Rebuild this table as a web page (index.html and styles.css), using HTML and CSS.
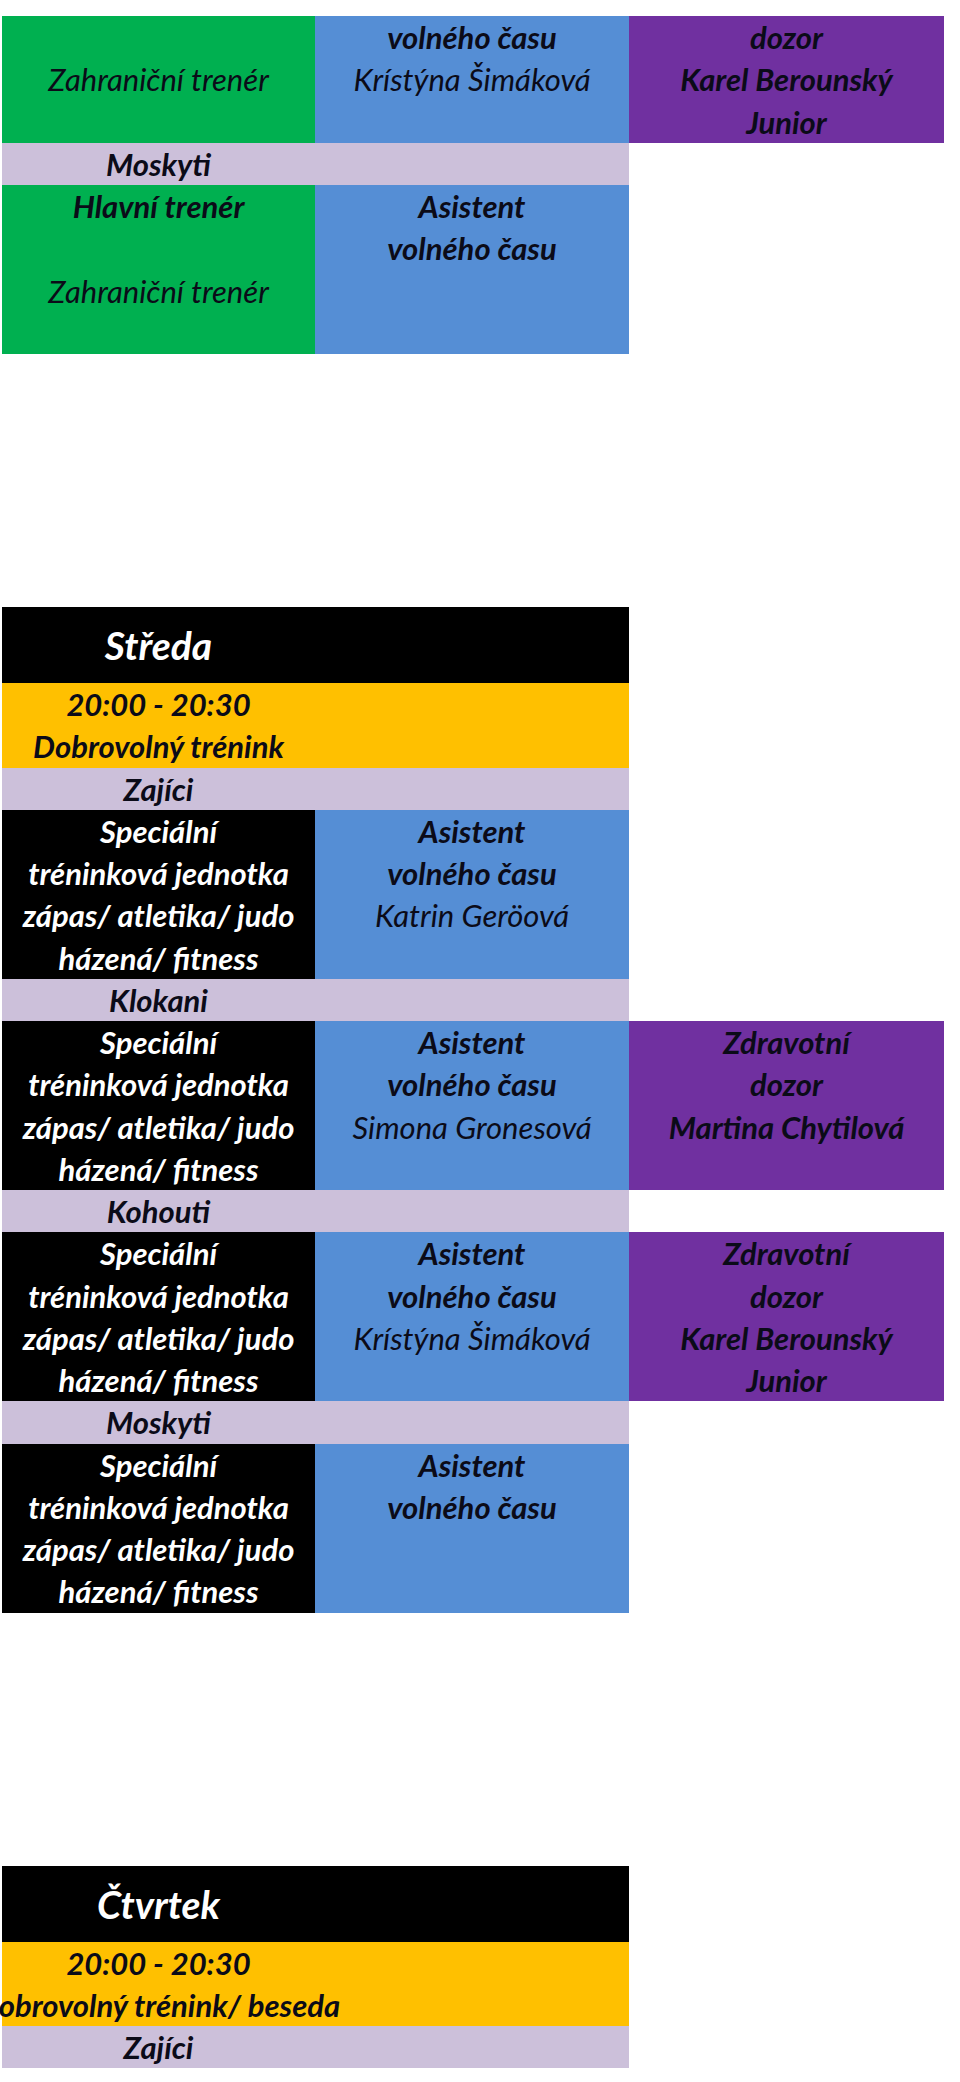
FILE: index.html
```html
<!DOCTYPE html>
<html lang="cs">
<head>
<meta charset="utf-8">
<title>Rozvrh</title>
<link rel="stylesheet" href="styles.css">
</head>
<body>
<main class="page">

  <section class="day">
    <div class="grid">
      <div class="cell green c1">
        <div class="ln"></div>
        <div class="ln">Zahraniční trenér</div>
      </div>
      <div class="cell blue">
        <div class="ln b">volného času</div>
        <div class="ln">Krístýna Šimáková</div>
      </div>
      <div class="cell purple">
        <div class="ln b">dozor</div>
        <div class="ln b">Karel Berounský</div>
        <div class="ln b">Junior</div>
      </div>

      <div class="band lav"><div class="ln b">Moskyti</div></div>

      <div class="cell green c1 h4">
        <div class="ln b">Hlavní trenér</div>
        <div class="ln"></div>
        <div class="ln">Zahraniční trenér</div>
      </div>
      <div class="cell blue h4">
        <div class="ln b">Asistent</div>
        <div class="ln b">volného času</div>
      </div>
    </div>
  </section>

  <section class="day">
    <div class="grid">
      <div class="band head"><div class="ln">Středa</div></div>
      <div class="band yellow">
        <div class="ln b">20:00 - 20:30</div>
        <div class="ln b">Dobrovolný trénink</div>
      </div>

      <div class="band lav"><div class="ln b">Zajíci</div></div>
      <div class="cell black c1 h4">
        <div class="ln b">Speciální</div>
        <div class="ln b">tréninková jednotka</div>
        <div class="ln b">zápas/ atletika/ judo</div>
        <div class="ln b">házená/ fitness</div>
      </div>
      <div class="cell blue h4">
        <div class="ln b">Asistent</div>
        <div class="ln b">volného času</div>
        <div class="ln">Katrin Geröová</div>
      </div>

      <div class="band lav"><div class="ln b">Klokani</div></div>
      <div class="cell black c1 h4">
        <div class="ln b">Speciální</div>
        <div class="ln b">tréninková jednotka</div>
        <div class="ln b">zápas/ atletika/ judo</div>
        <div class="ln b">házená/ fitness</div>
      </div>
      <div class="cell blue h4">
        <div class="ln b">Asistent</div>
        <div class="ln b">volného času</div>
        <div class="ln">Simona Gronesová</div>
      </div>
      <div class="cell purple h4">
        <div class="ln b">Zdravotní</div>
        <div class="ln b">dozor</div>
        <div class="ln b">Martina Chytilová</div>
      </div>

      <div class="band lav"><div class="ln b">Kohouti</div></div>
      <div class="cell black c1 h4">
        <div class="ln b">Speciální</div>
        <div class="ln b">tréninková jednotka</div>
        <div class="ln b">zápas/ atletika/ judo</div>
        <div class="ln b">házená/ fitness</div>
      </div>
      <div class="cell blue h4">
        <div class="ln b">Asistent</div>
        <div class="ln b">volného času</div>
        <div class="ln">Krístýna Šimáková</div>
      </div>
      <div class="cell purple h4">
        <div class="ln b">Zdravotní</div>
        <div class="ln b">dozor</div>
        <div class="ln b">Karel Berounský</div>
        <div class="ln b">Junior</div>
      </div>

      <div class="band lav"><div class="ln b">Moskyti</div></div>
      <div class="cell black c1 h4">
        <div class="ln b">Speciální</div>
        <div class="ln b">tréninková jednotka</div>
        <div class="ln b">zápas/ atletika/ judo</div>
        <div class="ln b">házená/ fitness</div>
      </div>
      <div class="cell blue h4">
        <div class="ln b">Asistent</div>
        <div class="ln b">volného času</div>
      </div>
    </div>
  </section>

  <section class="day">
    <div class="grid">
      <div class="band head"><div class="ln">Čtvrtek</div></div>
      <div class="band yellow">
        <div class="ln b">20:00 - 20:30</div>
        <div class="ln b">Dobrovolný trénink/ beseda</div>
      </div>
      <div class="band lav"><div class="ln b">Zajíci</div></div>
    </div>
  </section>

</main>
</body>
</html>
```

FILE: styles.css
```css
* { box-sizing: border-box; }

html, body {
  margin: 0;
  padding: 0;
  background: #ffffff;
}

body {
  font-family: Lato, "Open Sans", "DejaVu Sans", sans-serif;
  font-style: italic;
  font-weight: 400;
  font-size: 31px;
  color: #0b0b18;
}

.page {
  width: 960px;
  padding: 16px 0 0 2px;
  display: flex;
  flex-direction: column;
  gap: 253px;
}

.grid {
  display: grid;
  grid-template-columns: 313px 314px 315px;
  width: 942px;
}

.cell {
  display: flex;
  flex-direction: column;
}

.c1 { grid-column-start: 1; }

.h4 { min-height: 169px; }

.band {
  grid-column: 1 / span 2;
  display: flex;
  flex-direction: column;
}

.band .ln { width: 313px; }

.ln {
  height: 42.25px;
  display: flex;
  justify-content: center;
  align-items: center;
  white-space: nowrap;
}

.b { font-weight: 700; }

.green  { background: #00b050; }
.blue   { background: #558ed5; }
.purple { background: #7030a0; }
.lav    { background: #ccc0da; }
.yellow { background: #ffc000; }
.black  { background: #000000; color: #ffffff; }

.head {
  background: #000000;
  color: #ffffff;
  height: 76px;
  justify-content: center;
}

.head .ln {
  height: 76px;
  font-size: 39px;
  font-weight: 700;
}
```
